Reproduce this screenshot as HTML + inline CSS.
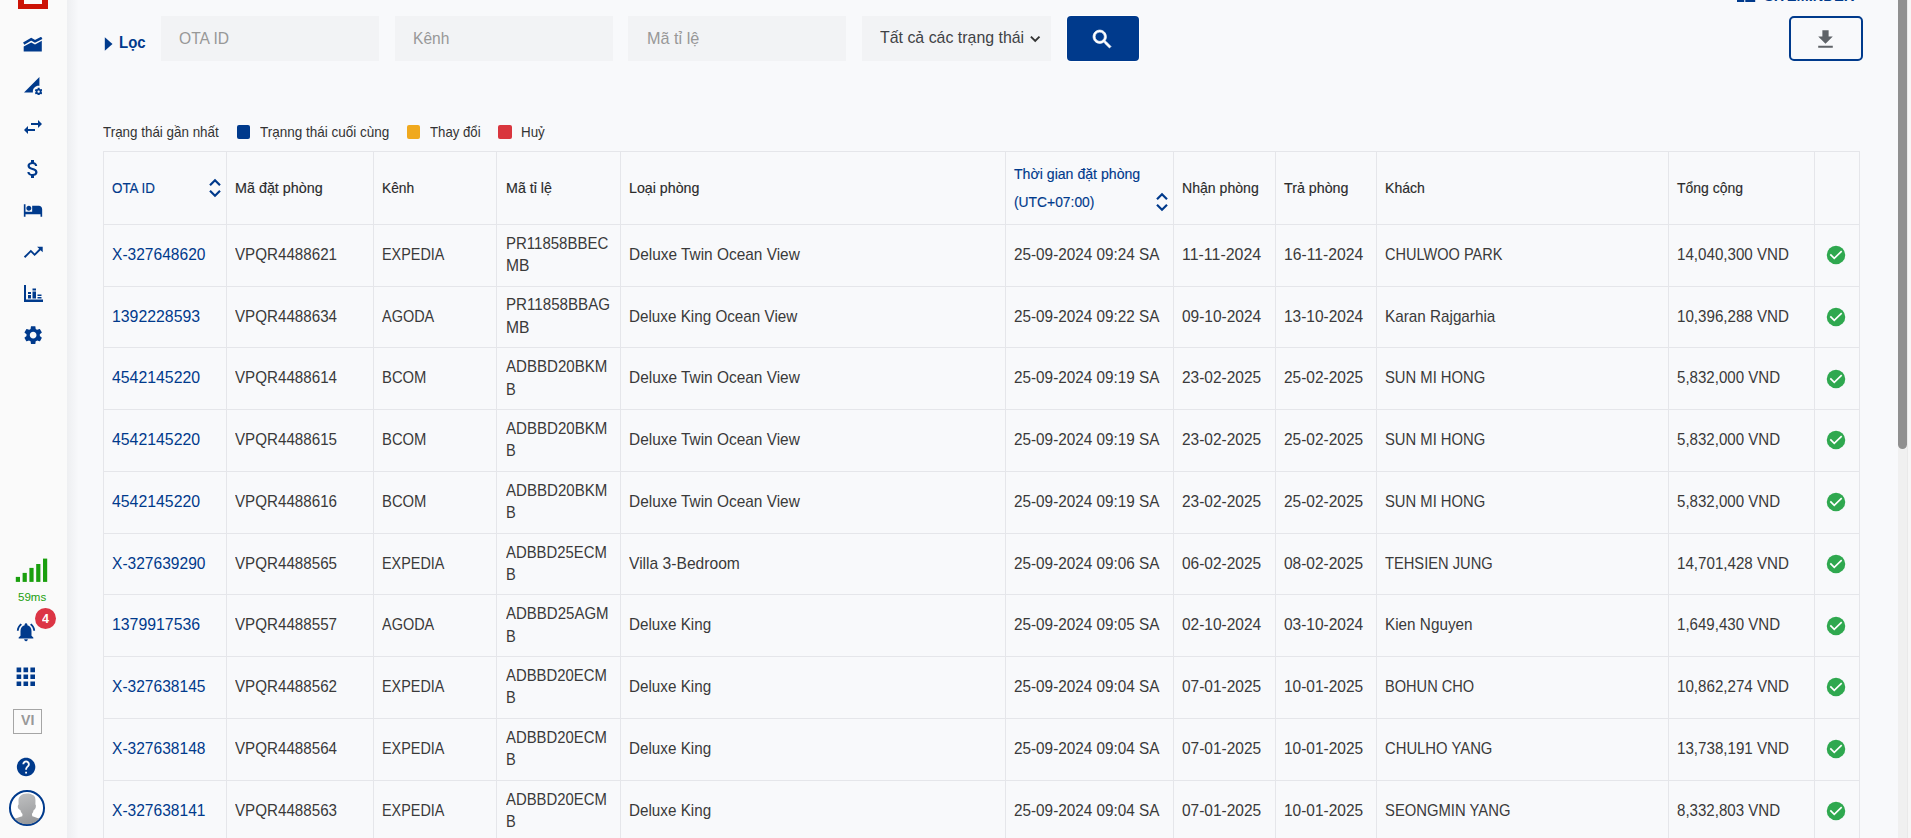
<!DOCTYPE html>
<html lang="vi"><head><meta charset="utf-8"><title>Đặt phòng</title>
<style>
*{box-sizing:border-box;margin:0;padding:0}
html,body{width:1911px;height:838px;overflow:hidden;background:#f8f9fb}
body{position:relative;font-family:"Liberation Sans",sans-serif;color:#333;font-size:15.4px}
.side{position:absolute;left:0;top:0;width:67px;height:838px;background:#fafafa;z-index:2}
.side svg,.side div{position:absolute}
.logo{left:18px;top:-21.200px;width:30px;height:30px;border:6px solid #cc1306;border-bottom-width:5.500px;background:#fbfbfb}
.tbl{position:absolute;left:0;top:0;width:1911px;height:838px}
.hl{position:absolute;left:103px;width:1757px;height:1px;background:#e5e6ea}
.vl{position:absolute;top:151px;width:1px;height:700px;background:#e5e6ea}
.srt,.chk{position:absolute}
.flt{position:absolute;top:16px;height:45px;background:#f2f3f5}
.loc{color:#003a8c;font-weight:bold}
.selt{color:#3f4245}
.btn{position:absolute;left:1067px;top:16px;width:72px;height:45px;background:#003a8c;border-radius:4px;box-shadow:0 0 0 1px #fff}
.dl{position:absolute;left:1789px;top:16px;width:74px;height:45px;border:2px solid #003a8c;border-radius:5px}
.lg{color:#333}
.sq{position:absolute;top:125px;width:13px;height:14px;border-radius:2px}
.sbtrack{position:absolute;left:1898px;top:0;width:13px;height:838px;background:linear-gradient(to right,#f0f0f0 0,#f0f0f0 9.500px,#e9e9e9 9.500px,#e9e9e9 10.300px,#f6f6f6 10.300px)}
.sbthumb{position:absolute;left:1898px;top:-10px;width:9px;height:459px;background:#909090;border-radius:5px}
.brand{color:#003a8c;font-weight:bold}
.t{position:absolute;white-space:nowrap;line-height:20px;transform-origin:0 50%;display:block}
.hd{color:#2b2b2b;-webkit-text-stroke:.14px currentColor}
.bd{color:#3a3a3a}
.bl{color:#003a8c}
.ph{color:#989898}
.shade{position:absolute;left:67px;top:0;width:12px;height:838px;background:linear-gradient(to right,rgba(10,15,30,.045),rgba(10,15,30,0));z-index:1}
.ms{color:#1a9f0e;z-index:3}
.bdg{color:#fff;font-weight:bold;z-index:3}
.vi{color:#989898;font-weight:bold;z-index:3}

</style></head><body>
<div class="side">
<div class="logo"></div>
<svg style="left:22.800px;top:36.600px" width="20" height="16" viewBox="0 0 20 16"><path d="M0.7 9.6 L8.2 5.4 L12 7.6 L18.8 3.8 L18.8 14.6 L0.7 14.6 Z" fill="#003a8c"/><path d="M0.7 6.6 L8.2 2.2 L12 4.4 L18.8 0.8" fill="none" stroke="#003a8c" stroke-width="2.500"/></svg>
<svg style="left:23.600px;top:76.800px" width="18.500" height="18.500" viewBox="0 0 24 24"><path fill="#003a8c" d="M18.99 11.5c.34 0 .67.03 1 .07L20 0 0 20h11.56c-.04-.33-.07-.66-.07-1 0-4.14 3.36-7.5 7.5-7.5zm3.71 7.99c.02-.16.04-.32.04-.49 0-.17-.01-.33-.04-.49l1.06-.83c.09-.08.12-.21.06-.32l-1-1.73c-.06-.11-.19-.15-.31-.11l-1.24.5c-.26-.2-.54-.37-.85-.49l-.19-1.32c-.01-.12-.12-.21-.24-.21h-2c-.12 0-.23.09-.25.21l-.19 1.32c-.3.13-.59.29-.85.49l-1.24-.5c-.11-.04-.24 0-.31.11l-1 1.73c-.06.11-.04.24.06.32l1.06.83c-.02.16-.03.32-.03.49 0 .17.01.33.03.49l-1.06.83c-.09.08-.12.21-.06.32l1 1.73c.06.11.19.15.31.11l1.24-.5c.26.2.54.37.85.49l.19 1.32c.02.12.12.21.25.21h2c.12 0 .23-.09.25-.21l.19-1.32c.3-.13.59-.29.84-.49l1.25.5c.11.04.24 0 .31-.11l1-1.73c.06-.11.03-.24-.06-.32l-1.07-.83zm-3.71 1.01c-.83 0-1.5-.67-1.5-1.5s.67-1.5 1.5-1.5 1.5.67 1.5 1.5-.67 1.5-1.5 1.5z"/></svg>
<svg style="left:21px;top:115px" width="24" height="24" viewBox="0 0 24 24"><path fill="#003a8c" d="M6.99 11L3 15l3.99 4v-3H14v-2H6.99v-3zM21 9l-3.99-4v3H10v2h7.01v3L21 9z"/></svg>
<svg style="left:20.700px;top:156.900px" width="24" height="24" viewBox="0 0 24 24"><path fill="#003a8c" d="M11.8 10.9c-2.27-.59-3-1.2-3-2.15 0-1.09 1.01-1.85 2.7-1.85 1.78 0 2.44.85 2.5 2.1h2.21c-.07-1.72-1.12-3.3-3.21-3.81V3h-3v2.16c-1.94.42-3.5 1.68-3.5 3.61 0 2.31 1.91 3.46 4.7 4.13 2.5.6 3 1.48 3 2.41 0 .69-.49 1.79-2.7 1.79-2.06 0-2.87-.92-2.98-2.1h-2.2c.12 2.19 1.76 3.42 3.68 3.83V21h3v-2.15c1.95-.37 3.5-1.5 3.5-3.55 0-2.84-2.43-3.81-4.7-4.4z"/></svg>
<svg style="left:23.100px;top:199.700px" width="20" height="20" viewBox="0 0 24 24"><path fill="#003a8c" d="M7 13c1.66 0 3-1.340 3-3S8.66 7 7 7s-3 1.340-3 3 1.340 3 3 3zm12-6h-8v7H3V5H1v15h2v-3h18v3h2v-9c0-2.210-1.790-4-4-4z"/></svg>
<svg style="left:22px;top:240.600px" width="22.600" height="22.600" viewBox="0 0 24 24"><path fill="#003a8c" d="M16 6l2.290 2.290-4.880 4.880-4-4L2 16.590 3.410 18l6-6 4 4 6.300-6.290L22 12V6z"/></svg>
<svg style="left:23.900px;top:285px" width="19" height="18" viewBox="0 0 19 18"><path fill="#003a8c" d="M0 0h2v14.500h17V17H0z M4 7h3v2H4z M4 10h3v3.500H4z M8.500 3.500h3.500v2H8.500z M8.500 6.500h3.500v7H8.500z M13.500 9.500h4v1.500h-4z M13.500 12h4v1.500h-4z"/></svg>
<svg style="left:21.900px;top:323.900px" width="22.300" height="22.300" viewBox="0 0 24 24"><path fill="#003a8c" d="M19.140 12.940c.040-.300.060-.610.060-.940 0-.320-.020-.640-.070-.940l2.030-1.580c.180-.140.230-.410.120-.610l-1.920-3.320c-.120-.220-.370-.290-.590-.220l-2.390.960c-.500-.380-1.030-.700-1.620-.940l-.360-2.540c-.040-.240-.240-.410-.480-.410h-3.840c-.240 0-.430.170-.470.410l-.360 2.540c-.590.240-1.130.570-1.620.940l-2.390-.960c-.220-.080-.470 0-.590.220L2.740 8.870c-.120.210-.080.470.120.610l2.030 1.580c-.050.300-.090.630-.090.940s.020.640.070.940l-2.030 1.580c-.180.140-.230.410-.120.610l1.920 3.320c.120.220.370.290.590.220l2.390-.960c.500.380 1.030.700 1.620.940l.360 2.540c.050.240.240.410.480.410h3.840c.240 0 .440-.170.470-.410l.360-2.540c.590-.240 1.130-.560 1.620-.940l2.390.960c.220.080.470 0 .590-.220l1.920-3.320c.120-.220.070-.470-.120-.610l-2.010-1.580zM12 15.600c-1.980 0-3.600-1.620-3.600-3.600s1.620-3.600 3.600-3.600 3.600 1.620 3.600 3.600-1.620 3.600-3.600 3.600z"/></svg>
<svg style="left:15px;top:558px" width="34" height="25" viewBox="0 0 34 25"><g fill="#1a9f0e"><rect x="0.800" y="18.900" width="4.200" height="5"/><rect x="7.600" y="14.900" width="4.200" height="9"/><rect x="14.400" y="9.900" width="4.200" height="14"/><rect x="21.200" y="6" width="4.200" height="17.900"/><rect x="28" y="0.600" width="4.200" height="23.300"/></g></svg>
<svg style="left:15.100px;top:620.700px" width="22" height="22" viewBox="0 0 24 24"><path fill="#003a8c" d="M7.580 4.080L6.150 2.650C3.750 4.480 2.170 7.300 2.030 10.500h2c.150-2.650 1.510-4.970 3.550-6.420zm12.390 6.420h2c-.150-3.200-1.730-6.020-4.120-7.850l-1.420 1.430c2.020 1.450 3.390 3.770 3.540 6.420zM18 11c0-3.070-1.640-5.640-4.500-6.320V4c0-.830-.670-1.500-1.500-1.500s-1.500.670-1.500 1.500v.680C7.630 5.360 6 7.920 6 11v5l-2 2v1h16v-1l-2-2v-5zm-6 11c.140 0 .270-.010.400-.040.650-.140 1.180-.580 1.440-1.180.100-.240.150-.500.150-.780h-4c.010 1.100.900 2 2.010 2z"/></svg>
<div style="left:35px;top:608px;width:21px;height:21px;border-radius:11px;background:#dc3545"></div>
<svg style="left:12.400px;top:663.200px" width="27.600" height="27.600" viewBox="0 0 24 24"><path fill="#003a8c" d="M4 8h4V4H4v4zm6 12h4v-4h-4v4zm-6 0h4v-4H4v4zm0-6h4v-4H4v4zm6 0h4v-4h-4v4zm6-10v4h4V4h-4zm-6 4h4V4h-4v4zm6 6h4v-4h-4v4zm0 6h4v-4h-4v4z"/></svg>
<div style="left:13px;top:709px;width:29px;height:25px;border:1px solid #a5a5a5"></div>
<svg style="left:14.950px;top:755.800px" width="22.200" height="22.200" viewBox="0 0 24 24"><path fill="#003a8c" d="M12 2C6.480 2 2 6.480 2 12s4.480 10 10 10 10-4.480 10-10S17.520 2 12 2zm1 17h-2v-2h2v2zm2.070-7.750l-.900.920C13.450 12.900 13 13.500 13 15h-2v-.500c0-1.100.450-2.100 1.170-2.830l1.240-1.260c.370-.360.590-.860.590-1.410 0-1.100-.900-2-2-2s-2 .900-2 2H8c0-2.210 1.790-4 4-4s4 1.790 4 4c0 .880-.360 1.680-.930 2.250z"/></svg>
<svg style="left:8.070px;top:788.750px" width="38" height="38" viewBox="0 0 38 38"><defs><clipPath id="av"><circle cx="19" cy="19" r="16.300"/></clipPath><linearGradient id="avg" x1="0" y1="0" x2="0.300" y2="1"><stop offset="0" stop-color="#c2c3c4"/><stop offset="1" stop-color="#97989a"/></linearGradient></defs><circle cx="19" cy="19" r="17.050" fill="#fff" stroke="#003a8c" stroke-width="2"/><g clip-path="url(#av)"><path fill="url(#avg)" d="M3 31 C7 29.200 11 28.600 14.300 27.300 L14.500 25 C13.200 23.800 12.600 22.400 12.400 21 C10.600 20.600 9.600 18.800 9.800 17.300 C9.900 16.200 10.300 15.600 10.600 15.400 L10.500 12 C10.400 9.500 11 8.200 12.500 6.800 C14 5.200 16.500 4.400 18.800 4.400 C21.500 4.400 24 5 25.800 6.600 C27.200 8 27.500 9.500 27.450 12 L27.400 15.400 C27.800 15.700 28 16.400 27.900 17.300 C27.900 18.800 27 20.600 25.700 21 C25.400 22.500 24.800 23.900 23.900 25 L24.300 27.300 C27.500 28.600 31 29.200 35 31 L35 38 L3 38 Z"/></g></svg>
</div>
<div class="shade"></div>
<span class="t ms" style="left:18.40px;top:587.18px;font-size:11.60px;transform:scaleX(0.9942)">59ms</span>
<span class="t bdg" style="left:42.00px;top:608.70px;font-size:13.00px;transform:scaleX(0.9682)">4</span>
<span class="t vi" style="left:20.60px;top:709.88px;font-size:14.20px;transform:scaleX(0.9988)">VI</span>
<svg style="position:absolute;left:1737px;top:-12.300px" width="19" height="14" viewBox="0 0 19 14"><rect x="0" y="0" width="7.200" height="14" fill="#003a8c"/><rect x="8.300" y="0" width="9.900" height="14" fill="#003a8c"/></svg>
<svg style="position:absolute;left:104px;top:35px" width="10" height="18" viewBox="0 0 10 18"><path d="M0.800 2.200 L8.500 9 L0.800 15.800 Z" fill="#003a8c"/></svg>
<div class="flt" style="left:161px;width:218px"></div>
<div class="flt" style="left:395px;width:218px"></div>
<div class="flt" style="left:628px;width:218px"></div>
<div class="flt" style="left:862px;width:189px"></div>
<svg style="position:absolute;left:1029px;top:34px" width="13" height="10" viewBox="0 0 13 10"><path d="M1.900 2.600 L6.200 6.900 L10.500 2.600" fill="none" stroke="#333" stroke-width="1.900"/></svg>
<div class="btn"><svg style="position:absolute;left:22.900px;top:11.300px" width="24.600" height="24.600" viewBox="0 0 24 24"><path fill="#fff" stroke="#fff" stroke-width="0.700" stroke-linejoin="round" d="M15.500 14h-.790l-.280-.270C15.410 12.590 16 11.110 16 9.500 16 5.910 13.090 3 9.500 3S3 5.910 3 9.500 5.910 16 9.500 16c1.610 0 3.090-.590 4.230-1.570l.270.280v.790l5 4.990L20.490 19l-4.990-5zm-6 0C7.010 14 5 11.990 5 9.500S7.010 5 9.500 5 14 7.010 14 9.500 11.990 14 9.500 14z"/></svg></div>
<div class="dl"><svg style="position:absolute;left:22.150px;top:8.900px" width="25" height="25" viewBox="0 0 24 24"><path fill="#5f6368" d="M19 9h-4V3H9v6H5l7 7 7-7zM5 18v2h14v-2H5z"/></svg></div>
<div class="sq" style="left:237px;background:#003a8c"></div>
<div class="sq" style="left:407px;background:#f0a91e"></div>
<div class="sq" style="left:498px;width:14px;background:#d9363e"></div>
<span class="t loc" style="left:118.60px;top:33.19px;font-size:15.60px;transform:scaleX(0.9591)">Lọc</span>
<span class="t brand" style="left:1763.60px;top:-14.00px;font-size:15.00px;transform:scaleX(0.9751)">SITEMINDER</span>
<span class="t ph" style="left:179.00px;top:27.99px;font-size:16.20px;transform:scaleX(0.9652)">OTA ID</span>
<span class="t ph" style="left:412.60px;top:27.99px;font-size:16.20px;transform:scaleX(0.9614)">Kênh</span>
<span class="t ph" style="left:646.80px;top:27.99px;font-size:16.20px;transform:scaleX(1.0033)">Mã tỉ lệ</span>
<span class="t selt" style="left:880.30px;top:26.89px;font-size:16.20px;transform:scaleX(0.9829)">Tất cả các trạng thái</span>
<span class="t lg" style="left:102.90px;top:121.71px;font-size:14.10px;transform:scaleX(0.9510)">Trạng thái gần nhất</span>
<span class="t lg" style="left:259.90px;top:121.71px;font-size:14.10px;transform:scaleX(0.9580)">Trạnng thái cuối cùng</span>
<span class="t lg" style="left:429.80px;top:121.71px;font-size:14.10px;transform:scaleX(0.9356)">Thay đổi</span>
<span class="t lg" style="left:520.60px;top:121.71px;font-size:14.10px;transform:scaleX(0.9492)">Huỷ</span>
<div class="tbl">
<div class="hl" style="top:151px"></div>
<div class="hl" style="top:224px"></div>
<div class="hl" style="top:286px"></div>
<div class="hl" style="top:347px"></div>
<div class="hl" style="top:409px"></div>
<div class="hl" style="top:471px"></div>
<div class="hl" style="top:533px"></div>
<div class="hl" style="top:594px"></div>
<div class="hl" style="top:656px"></div>
<div class="hl" style="top:718px"></div>
<div class="hl" style="top:780px"></div>
<div class="vl" style="left:103px"></div>
<div class="vl" style="left:226px"></div>
<div class="vl" style="left:373px"></div>
<div class="vl" style="left:496px"></div>
<div class="vl" style="left:620px"></div>
<div class="vl" style="left:1005px"></div>
<div class="vl" style="left:1173px"></div>
<div class="vl" style="left:1275px"></div>
<div class="vl" style="left:1376px"></div>
<div class="vl" style="left:1668px"></div>
<div class="vl" style="left:1814px"></div>
<div class="vl" style="left:1859px"></div>
<span class="t hd bl" style="left:111.80px;top:177.98px;font-size:14.20px;transform:scaleX(0.9451)">OTA ID</span>
<span class="t hd" style="left:234.80px;top:177.98px;font-size:14.20px;transform:scaleX(1.0109)">Mã đặt phòng</span>
<span class="t hd" style="left:381.80px;top:177.98px;font-size:14.20px;transform:scaleX(0.9721)">Kênh</span>
<span class="t hd" style="left:505.80px;top:177.98px;font-size:14.20px;transform:scaleX(1.0051)">Mã tỉ lệ</span>
<span class="t hd" style="left:628.80px;top:177.98px;font-size:14.20px;transform:scaleX(1.0025)">Loại phòng</span>
<span class="t hd bl" style="left:1013.80px;top:163.98px;font-size:14.20px;transform:scaleX(0.9949)">Thời gian đặt phòng</span>
<span class="t hd bl" style="left:1013.80px;top:191.98px;font-size:14.20px;transform:scaleX(0.9760)">(UTC+07:00)</span>
<span class="t hd" style="left:1181.80px;top:177.98px;font-size:14.20px;transform:scaleX(0.9925)">Nhận phòng</span>
<span class="t hd" style="left:1283.80px;top:177.98px;font-size:14.20px;transform:scaleX(1.0049)">Trả phòng</span>
<span class="t hd" style="left:1384.80px;top:177.98px;font-size:14.20px;transform:scaleX(0.9909)">Khách</span>
<span class="t hd" style="left:1676.80px;top:177.98px;font-size:14.20px;transform:scaleX(0.9865)">Tổng cộng</span>
<svg class="srt" style="left:207.2px;top:176.9px" width="16" height="22" viewBox="0 0 16 22"><path d="M3 8.200 L8 3.200 L13 8.200 M3 13.800 L8 18.800 L13 13.800" fill="none" stroke="#003a8c" stroke-width="2.200"/></svg>
<svg class="srt" style="left:1154.2px;top:190.8px" width="16" height="22" viewBox="0 0 16 22"><path d="M3 8.200 L8 3.200 L13 8.200 M3 13.800 L8 18.800 L13 13.800" fill="none" stroke="#003a8c" stroke-width="2.200"/></svg>
<span class="t bd bl" style="left:111.80px;top:244.00px;font-size:16.20px;transform:scaleX(0.9612)">X-327648620</span>
<span class="t bd" style="left:234.80px;top:244.00px;font-size:16.20px;transform:scaleX(0.9366)">VPQR4488621</span>
<span class="t bd" style="left:381.80px;top:244.00px;font-size:16.20px;transform:scaleX(0.8886)">EXPEDIA</span>
<span class="t bd" style="left:505.80px;top:233.00px;font-size:16.20px;transform:scaleX(0.9264)">PR11858BBEC</span>
<span class="t bd" style="left:505.80px;top:255.00px;font-size:16.20px;transform:scaleX(0.9663)">MB</span>
<span class="t bd" style="left:628.80px;top:244.00px;font-size:16.20px;transform:scaleX(0.9521)">Deluxe Twin Ocean View</span>
<span class="t bd" style="left:1013.80px;top:244.00px;font-size:16.20px;transform:scaleX(0.9452)">25-09-2024 09:24 SA</span>
<span class="t bd" style="left:1181.80px;top:244.00px;font-size:16.20px;transform:scaleX(0.9842)">11-11-2024</span>
<span class="t bd" style="left:1283.80px;top:244.00px;font-size:16.20px;transform:scaleX(0.9697)">16-11-2024</span>
<span class="t bd" style="left:1384.80px;top:244.00px;font-size:16.20px;transform:scaleX(0.8982)">CHULWOO PARK</span>
<span class="t bd" style="left:1676.80px;top:244.00px;font-size:16.20px;transform:scaleX(0.9355)">14,040,300 VND</span>
<svg class="chk" style="left:1824.9px;top:243.9px" width="22" height="22" viewBox="0 0 22 22"><circle cx="11" cy="11" r="9.250" fill="#2fa84f"/><path d="M5.300 10.400 L9.250 14.350 L16.700 7.100" fill="none" stroke="#fff" stroke-width="1.650"/></svg>
<span class="t bd bl" style="left:111.80px;top:306.00px;font-size:16.20px;transform:scaleX(0.9785)">1392228593</span>
<span class="t bd" style="left:234.80px;top:306.00px;font-size:16.20px;transform:scaleX(0.9366)">VPQR4488634</span>
<span class="t bd" style="left:381.80px;top:306.00px;font-size:16.20px;transform:scaleX(0.8933)">AGODA</span>
<span class="t bd" style="left:505.80px;top:294.00px;font-size:16.20px;transform:scaleX(0.9351)">PR11858BBAG</span>
<span class="t bd" style="left:505.80px;top:317.00px;font-size:16.20px;transform:scaleX(0.9663)">MB</span>
<span class="t bd" style="left:628.80px;top:306.00px;font-size:16.20px;transform:scaleX(0.9413)">Deluxe King Ocean View</span>
<span class="t bd" style="left:1013.80px;top:306.00px;font-size:16.20px;transform:scaleX(0.9452)">25-09-2024 09:22 SA</span>
<span class="t bd" style="left:1181.80px;top:306.00px;font-size:16.20px;transform:scaleX(0.9556)">09-10-2024</span>
<span class="t bd" style="left:1283.80px;top:306.00px;font-size:16.20px;transform:scaleX(0.9556)">13-10-2024</span>
<span class="t bd" style="left:1384.80px;top:306.00px;font-size:16.20px;transform:scaleX(0.9430)">Karan Rajgarhia</span>
<span class="t bd" style="left:1676.80px;top:306.00px;font-size:16.20px;transform:scaleX(0.9355)">10,396,288 VND</span>
<svg class="chk" style="left:1824.9px;top:305.7px" width="22" height="22" viewBox="0 0 22 22"><circle cx="11" cy="11" r="9.250" fill="#2fa84f"/><path d="M5.300 10.400 L9.250 14.350 L16.700 7.100" fill="none" stroke="#fff" stroke-width="1.650"/></svg>
<span class="t bd bl" style="left:111.80px;top:367.00px;font-size:16.20px;transform:scaleX(0.9785)">4542145220</span>
<span class="t bd" style="left:234.80px;top:367.00px;font-size:16.20px;transform:scaleX(0.9366)">VPQR4488614</span>
<span class="t bd" style="left:381.80px;top:367.00px;font-size:16.20px;transform:scaleX(0.9155)">BCOM</span>
<span class="t bd" style="left:505.80px;top:356.00px;font-size:16.20px;transform:scaleX(0.9302)">ADBBD20BKM</span>
<span class="t bd" style="left:505.80px;top:379.00px;font-size:16.20px;transform:scaleX(0.9046)">B</span>
<span class="t bd" style="left:628.80px;top:367.00px;font-size:16.20px;transform:scaleX(0.9521)">Deluxe Twin Ocean View</span>
<span class="t bd" style="left:1013.80px;top:367.00px;font-size:16.20px;transform:scaleX(0.9452)">25-09-2024 09:19 SA</span>
<span class="t bd" style="left:1181.80px;top:367.00px;font-size:16.20px;transform:scaleX(0.9556)">23-02-2025</span>
<span class="t bd" style="left:1283.80px;top:367.00px;font-size:16.20px;transform:scaleX(0.9556)">25-02-2025</span>
<span class="t bd" style="left:1384.80px;top:367.00px;font-size:16.20px;transform:scaleX(0.9136)">SUN MI HONG</span>
<span class="t bd" style="left:1676.80px;top:367.00px;font-size:16.20px;transform:scaleX(0.9320)">5,832,000 VND</span>
<svg class="chk" style="left:1824.9px;top:367.5px" width="22" height="22" viewBox="0 0 22 22"><circle cx="11" cy="11" r="9.250" fill="#2fa84f"/><path d="M5.300 10.400 L9.250 14.350 L16.700 7.100" fill="none" stroke="#fff" stroke-width="1.650"/></svg>
<span class="t bd bl" style="left:111.80px;top:429.00px;font-size:16.20px;transform:scaleX(0.9785)">4542145220</span>
<span class="t bd" style="left:234.80px;top:429.00px;font-size:16.20px;transform:scaleX(0.9366)">VPQR4488615</span>
<span class="t bd" style="left:381.80px;top:429.00px;font-size:16.20px;transform:scaleX(0.9155)">BCOM</span>
<span class="t bd" style="left:505.80px;top:418.00px;font-size:16.20px;transform:scaleX(0.9302)">ADBBD20BKM</span>
<span class="t bd" style="left:505.80px;top:440.00px;font-size:16.20px;transform:scaleX(0.9046)">B</span>
<span class="t bd" style="left:628.80px;top:429.00px;font-size:16.20px;transform:scaleX(0.9521)">Deluxe Twin Ocean View</span>
<span class="t bd" style="left:1013.80px;top:429.00px;font-size:16.20px;transform:scaleX(0.9452)">25-09-2024 09:19 SA</span>
<span class="t bd" style="left:1181.80px;top:429.00px;font-size:16.20px;transform:scaleX(0.9556)">23-02-2025</span>
<span class="t bd" style="left:1283.80px;top:429.00px;font-size:16.20px;transform:scaleX(0.9556)">25-02-2025</span>
<span class="t bd" style="left:1384.80px;top:429.00px;font-size:16.20px;transform:scaleX(0.9136)">SUN MI HONG</span>
<span class="t bd" style="left:1676.80px;top:429.00px;font-size:16.20px;transform:scaleX(0.9320)">5,832,000 VND</span>
<svg class="chk" style="left:1824.9px;top:429.2px" width="22" height="22" viewBox="0 0 22 22"><circle cx="11" cy="11" r="9.250" fill="#2fa84f"/><path d="M5.300 10.400 L9.250 14.350 L16.700 7.100" fill="none" stroke="#fff" stroke-width="1.650"/></svg>
<span class="t bd bl" style="left:111.80px;top:491.00px;font-size:16.20px;transform:scaleX(0.9785)">4542145220</span>
<span class="t bd" style="left:234.80px;top:491.00px;font-size:16.20px;transform:scaleX(0.9366)">VPQR4488616</span>
<span class="t bd" style="left:381.80px;top:491.00px;font-size:16.20px;transform:scaleX(0.9155)">BCOM</span>
<span class="t bd" style="left:505.80px;top:480.00px;font-size:16.20px;transform:scaleX(0.9302)">ADBBD20BKM</span>
<span class="t bd" style="left:505.80px;top:502.00px;font-size:16.20px;transform:scaleX(0.9046)">B</span>
<span class="t bd" style="left:628.80px;top:491.00px;font-size:16.20px;transform:scaleX(0.9521)">Deluxe Twin Ocean View</span>
<span class="t bd" style="left:1013.80px;top:491.00px;font-size:16.20px;transform:scaleX(0.9452)">25-09-2024 09:19 SA</span>
<span class="t bd" style="left:1181.80px;top:491.00px;font-size:16.20px;transform:scaleX(0.9556)">23-02-2025</span>
<span class="t bd" style="left:1283.80px;top:491.00px;font-size:16.20px;transform:scaleX(0.9556)">25-02-2025</span>
<span class="t bd" style="left:1384.80px;top:491.00px;font-size:16.20px;transform:scaleX(0.9136)">SUN MI HONG</span>
<span class="t bd" style="left:1676.80px;top:491.00px;font-size:16.20px;transform:scaleX(0.9320)">5,832,000 VND</span>
<svg class="chk" style="left:1824.9px;top:491.0px" width="22" height="22" viewBox="0 0 22 22"><circle cx="11" cy="11" r="9.250" fill="#2fa84f"/><path d="M5.300 10.400 L9.250 14.350 L16.700 7.100" fill="none" stroke="#fff" stroke-width="1.650"/></svg>
<span class="t bd bl" style="left:111.80px;top:553.00px;font-size:16.20px;transform:scaleX(0.9612)">X-327639290</span>
<span class="t bd" style="left:234.80px;top:553.00px;font-size:16.20px;transform:scaleX(0.9366)">VPQR4488565</span>
<span class="t bd" style="left:381.80px;top:553.00px;font-size:16.20px;transform:scaleX(0.8886)">EXPEDIA</span>
<span class="t bd" style="left:505.80px;top:542.00px;font-size:16.20px;transform:scaleX(0.9183)">ADBBD25ECM</span>
<span class="t bd" style="left:505.80px;top:564.00px;font-size:16.20px;transform:scaleX(0.9046)">B</span>
<span class="t bd" style="left:628.80px;top:553.00px;font-size:16.20px;transform:scaleX(0.9649)">Villa 3-Bedroom</span>
<span class="t bd" style="left:1013.80px;top:553.00px;font-size:16.20px;transform:scaleX(0.9452)">25-09-2024 09:06 SA</span>
<span class="t bd" style="left:1181.80px;top:553.00px;font-size:16.20px;transform:scaleX(0.9556)">06-02-2025</span>
<span class="t bd" style="left:1283.80px;top:553.00px;font-size:16.20px;transform:scaleX(0.9556)">08-02-2025</span>
<span class="t bd" style="left:1384.80px;top:553.00px;font-size:16.20px;transform:scaleX(0.9073)">TEHSIEN JUNG</span>
<span class="t bd" style="left:1676.80px;top:553.00px;font-size:16.20px;transform:scaleX(0.9355)">14,701,428 VND</span>
<svg class="chk" style="left:1824.9px;top:552.8px" width="22" height="22" viewBox="0 0 22 22"><circle cx="11" cy="11" r="9.250" fill="#2fa84f"/><path d="M5.300 10.400 L9.250 14.350 L16.700 7.100" fill="none" stroke="#fff" stroke-width="1.650"/></svg>
<span class="t bd bl" style="left:111.80px;top:614.00px;font-size:16.20px;transform:scaleX(0.9785)">1379917536</span>
<span class="t bd" style="left:234.80px;top:614.00px;font-size:16.20px;transform:scaleX(0.9366)">VPQR4488557</span>
<span class="t bd" style="left:381.80px;top:614.00px;font-size:16.20px;transform:scaleX(0.8933)">AGODA</span>
<span class="t bd" style="left:505.80px;top:603.00px;font-size:16.20px;transform:scaleX(0.9270)">ADBBD25AGM</span>
<span class="t bd" style="left:505.80px;top:626.00px;font-size:16.20px;transform:scaleX(0.9046)">B</span>
<span class="t bd" style="left:628.80px;top:614.00px;font-size:16.20px;transform:scaleX(0.9409)">Deluxe King</span>
<span class="t bd" style="left:1013.80px;top:614.00px;font-size:16.20px;transform:scaleX(0.9452)">25-09-2024 09:05 SA</span>
<span class="t bd" style="left:1181.80px;top:614.00px;font-size:16.20px;transform:scaleX(0.9556)">02-10-2024</span>
<span class="t bd" style="left:1283.80px;top:614.00px;font-size:16.20px;transform:scaleX(0.9556)">03-10-2024</span>
<span class="t bd" style="left:1384.80px;top:614.00px;font-size:16.20px;transform:scaleX(0.9442)">Kien Nguyen</span>
<span class="t bd" style="left:1676.80px;top:614.00px;font-size:16.20px;transform:scaleX(0.9320)">1,649,430 VND</span>
<svg class="chk" style="left:1824.9px;top:614.6px" width="22" height="22" viewBox="0 0 22 22"><circle cx="11" cy="11" r="9.250" fill="#2fa84f"/><path d="M5.300 10.400 L9.250 14.350 L16.700 7.100" fill="none" stroke="#fff" stroke-width="1.650"/></svg>
<span class="t bd bl" style="left:111.80px;top:676.00px;font-size:16.20px;transform:scaleX(0.9612)">X-327638145</span>
<span class="t bd" style="left:234.80px;top:676.00px;font-size:16.20px;transform:scaleX(0.9366)">VPQR4488562</span>
<span class="t bd" style="left:381.80px;top:676.00px;font-size:16.20px;transform:scaleX(0.8886)">EXPEDIA</span>
<span class="t bd" style="left:505.80px;top:665.00px;font-size:16.20px;transform:scaleX(0.9183)">ADBBD20ECM</span>
<span class="t bd" style="left:505.80px;top:687.00px;font-size:16.20px;transform:scaleX(0.9046)">B</span>
<span class="t bd" style="left:628.80px;top:676.00px;font-size:16.20px;transform:scaleX(0.9409)">Deluxe King</span>
<span class="t bd" style="left:1013.80px;top:676.00px;font-size:16.20px;transform:scaleX(0.9452)">25-09-2024 09:04 SA</span>
<span class="t bd" style="left:1181.80px;top:676.00px;font-size:16.20px;transform:scaleX(0.9556)">07-01-2025</span>
<span class="t bd" style="left:1283.80px;top:676.00px;font-size:16.20px;transform:scaleX(0.9556)">10-01-2025</span>
<span class="t bd" style="left:1384.80px;top:676.00px;font-size:16.20px;transform:scaleX(0.9012)">BOHUN CHO</span>
<span class="t bd" style="left:1676.80px;top:676.00px;font-size:16.20px;transform:scaleX(0.9355)">10,862,274 VND</span>
<svg class="chk" style="left:1824.9px;top:676.4px" width="22" height="22" viewBox="0 0 22 22"><circle cx="11" cy="11" r="9.250" fill="#2fa84f"/><path d="M5.300 10.400 L9.250 14.350 L16.700 7.100" fill="none" stroke="#fff" stroke-width="1.650"/></svg>
<span class="t bd bl" style="left:111.80px;top:738.00px;font-size:16.20px;transform:scaleX(0.9612)">X-327638148</span>
<span class="t bd" style="left:234.80px;top:738.00px;font-size:16.20px;transform:scaleX(0.9366)">VPQR4488564</span>
<span class="t bd" style="left:381.80px;top:738.00px;font-size:16.20px;transform:scaleX(0.8886)">EXPEDIA</span>
<span class="t bd" style="left:505.80px;top:727.00px;font-size:16.20px;transform:scaleX(0.9183)">ADBBD20ECM</span>
<span class="t bd" style="left:505.80px;top:749.00px;font-size:16.20px;transform:scaleX(0.9046)">B</span>
<span class="t bd" style="left:628.80px;top:738.00px;font-size:16.20px;transform:scaleX(0.9409)">Deluxe King</span>
<span class="t bd" style="left:1013.80px;top:738.00px;font-size:16.20px;transform:scaleX(0.9452)">25-09-2024 09:04 SA</span>
<span class="t bd" style="left:1181.80px;top:738.00px;font-size:16.20px;transform:scaleX(0.9556)">07-01-2025</span>
<span class="t bd" style="left:1283.80px;top:738.00px;font-size:16.20px;transform:scaleX(0.9556)">10-01-2025</span>
<span class="t bd" style="left:1384.80px;top:738.00px;font-size:16.20px;transform:scaleX(0.9160)">CHULHO YANG</span>
<span class="t bd" style="left:1676.80px;top:738.00px;font-size:16.20px;transform:scaleX(0.9355)">13,738,191 VND</span>
<svg class="chk" style="left:1824.9px;top:738.1px" width="22" height="22" viewBox="0 0 22 22"><circle cx="11" cy="11" r="9.250" fill="#2fa84f"/><path d="M5.300 10.400 L9.250 14.350 L16.700 7.100" fill="none" stroke="#fff" stroke-width="1.650"/></svg>
<span class="t bd bl" style="left:111.80px;top:800.00px;font-size:16.20px;transform:scaleX(0.9612)">X-327638141</span>
<span class="t bd" style="left:234.80px;top:800.00px;font-size:16.20px;transform:scaleX(0.9366)">VPQR4488563</span>
<span class="t bd" style="left:381.80px;top:800.00px;font-size:16.20px;transform:scaleX(0.8886)">EXPEDIA</span>
<span class="t bd" style="left:505.80px;top:789.00px;font-size:16.20px;transform:scaleX(0.9183)">ADBBD20ECM</span>
<span class="t bd" style="left:505.80px;top:811.00px;font-size:16.20px;transform:scaleX(0.9046)">B</span>
<span class="t bd" style="left:628.80px;top:800.00px;font-size:16.20px;transform:scaleX(0.9409)">Deluxe King</span>
<span class="t bd" style="left:1013.80px;top:800.00px;font-size:16.20px;transform:scaleX(0.9452)">25-09-2024 09:04 SA</span>
<span class="t bd" style="left:1181.80px;top:800.00px;font-size:16.20px;transform:scaleX(0.9556)">07-01-2025</span>
<span class="t bd" style="left:1283.80px;top:800.00px;font-size:16.20px;transform:scaleX(0.9556)">10-01-2025</span>
<span class="t bd" style="left:1384.80px;top:800.00px;font-size:16.20px;transform:scaleX(0.9155)">SEONGMIN YANG</span>
<span class="t bd" style="left:1676.80px;top:800.00px;font-size:16.20px;transform:scaleX(0.9320)">8,332,803 VND</span>
<svg class="chk" style="left:1824.9px;top:799.9px" width="22" height="22" viewBox="0 0 22 22"><circle cx="11" cy="11" r="9.250" fill="#2fa84f"/><path d="M5.300 10.400 L9.250 14.350 L16.700 7.100" fill="none" stroke="#fff" stroke-width="1.650"/></svg>
</div>
<div class="sbtrack"></div><div class="sbthumb"></div>
</body></html>
